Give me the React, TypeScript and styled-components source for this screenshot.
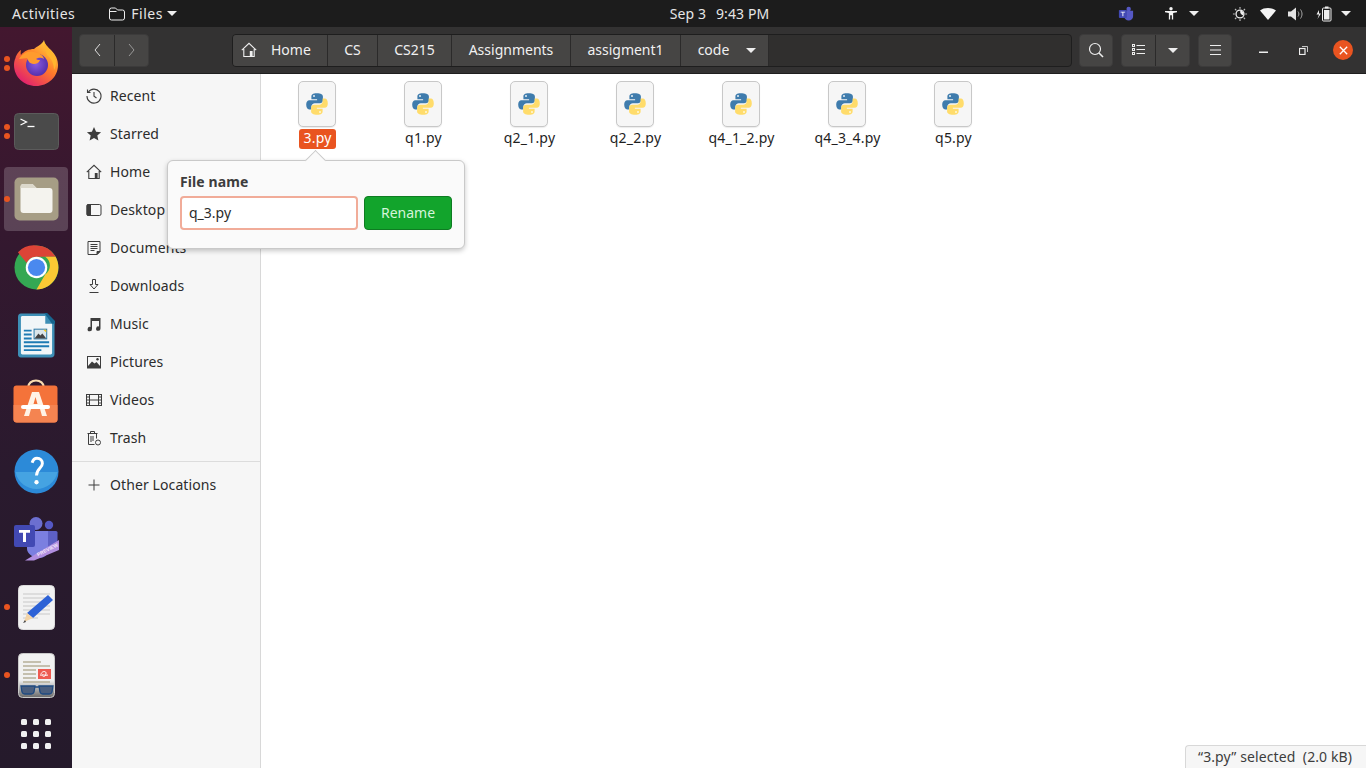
import React from "react";
import styled, { createGlobalStyle } from "styled-components";

const Global = createGlobalStyle`
  html, body { margin: 0; padding: 0; height: 100%; overflow: hidden; }
  body { font-family: "Noto Sans", "Open Sans", sans-serif; background: #fff; }
  #root { height: 768px; width: 1366px; }
`;

const Screen = styled.div`
  width: 1366px; height: 768px; display: flex; flex-direction: column; overflow: hidden;
`;
const TopBar = styled.header`
  height: 27px; flex: none; background: #1c1c1c; color: #e6e6e6; display: grid;
  grid-template-columns: 1fr auto 1fr; align-items: center; font-size: 14px;
`;
const TopLeft = styled.div`display: flex; align-items: center; padding-left: 12px; letter-spacing: 0.5px;`;
const AppMenu = styled.div`display: flex; align-items: center; gap: 6px; margin-left: 34px; & > svg:last-child { margin-left: -2px; }`;
const Clock = styled.div`display: flex; gap: 10px; font-size: 14px; margin-left: 73px; letter-spacing: 0.1px;`;
const Tray = styled.div`display: flex; align-items: center; justify-content: flex-end; padding-right: 15px;`;
const TrayItem = styled.span<{ $ml?: number }>`display: inline-flex; margin-left: ${p => p.$ml ?? 0}px;`;

const Body = styled.div`flex: 1; display: flex; min-height: 0;`;
const Dock = styled.nav`
  width: 72px; flex: none; display: flex; flex-direction: column; align-items: center; padding-top: 4px; overflow: hidden;
  background: linear-gradient(180deg, #43172f 0%, #33182f 30%, #2a1a2e 60%, #251a2b 100%);
`;
const DockSlot = styled.div<{ $active?: boolean }>`
  position: relative; width: 64px; height: 64px; flex: none; margin-bottom: 4px; border-radius: 4px;
  display: flex; align-items: center; justify-content: center;
  background: ${p => (p.$active ? "rgba(255,255,255,0.19)" : "transparent")};
`;
const LauncherSlot = styled(DockSlot)`height: 46px;`;
const RunDots = styled.div`
  position: absolute; left: 0; top: 0; bottom: 0; display: flex; flex-direction: column;
  justify-content: center; gap: 3px;
`;
const Dot = styled.i`display: block; width: 6px; height: 6px; border-radius: 50%; background: #e95420;`;

const Window = styled.div`flex: 1; display: flex; flex-direction: column; min-width: 0;`;
const HeaderBar = styled.div`
  height: 47px; flex: none; background: #333232; border-bottom: 1px solid #1f1f1f;
  display: flex; align-items: center; color: #f0f0f0; font-size: 14px; box-sizing: border-box;
`;
const BtnGroup = styled.div<{ $ml?: number }>`
  display: flex; height: 33px; margin-left: ${p => p.$ml ?? 0}px; border-radius: 4px; background: #464544;
  border: 1px solid #3c3b3b; box-sizing: border-box; overflow: hidden;
`;
const HBtn = styled.div<{ $w: number; $dim?: boolean }>`
  width: ${p => p.$w}px; box-sizing: border-box; display: flex; align-items: center; justify-content: center;
  & + & { border-left: 1px solid #2b2a2a; }
  & > svg { opacity: ${p => (p.$dim ? 0.55 : 1)}; }
`;
const PathBar = styled.div`
  width: 840px; height: 33px; margin-left: 83px; display: flex; background: #302f2e;
  border: 1px solid #1e1e1e; border-radius: 4px; box-sizing: border-box; overflow: hidden;
`;
const Crumb = styled.div<{ $w: number }>`
  width: ${p => p.$w}px; flex: none; box-sizing: border-box; background: #464544; border-right: 1px solid #2b2a2a;
  display: flex; align-items: center; justify-content: center; font-size: 14px;
  padding-bottom: 2px;
`;
const HomeCrumb = styled(Crumb)`justify-content: flex-start; padding-left: 8px; gap: 14px; & > svg { margin-top: 2px; }`;
const CodeCrumb = styled(Crumb)`gap: 17px; padding-left: 5px; & > svg { margin-top: 2px; }`;
const WinCtl = styled.div<{ $w: number; $ml?: number }>`
  width: ${p => p.$w}px; margin-left: ${p => p.$ml ?? 0}px; display: flex; align-items: center; justify-content: center;
`;
const CloseDot = styled.div`
  width: 20px; height: 20px; border-radius: 50%; background: #e95420; display: flex; align-items: center; justify-content: center;
`;

const Content = styled.div`flex: 1; display: flex; min-height: 0; position: relative;`;
const Sidebar = styled.aside`
  width: 188px; flex: none; background: #f6f6f6; border-right: 1px solid #d8d8d8; color: #2c2c2c;
  font-size: 14px; letter-spacing: 0.1px; padding-top: 3px;
`;
const SideRow = styled.div`height: 38px; display: flex; align-items: center; padding-left: 14px; gap: 8px; & > span:last-child { margin-top: -2px; }`;
const SideIcon = styled.span`width: 16px; height: 16px; display: inline-flex; color: #3d3d3d;`;
const SideSep = styled.div`height: 1px; background: #dcdcdc; margin: 4px 0 4px;`;

const Files = styled.main`
  flex: 1; background: #fff; position: relative; display: flex; align-items: flex-start; padding: 7px 0 0 3px;
`;
const FileItem = styled.div`
  width: 106px; display: flex; flex-direction: column; align-items: center; color: #1f1f1f; font-size: 14px; letter-spacing: 0.2px;
`;
const FileThumb = styled.div`
  width: 38px; height: 46px; box-sizing: border-box; border: 1px solid #c8c8c8; border-radius: 5px; background: #f6f6f6;
  display: flex; align-items: center; justify-content: center; box-shadow: 0 1px 1px rgba(0,0,0,0.08);
`;
const FileLabel = styled.div<{ $sel?: boolean }>`
  margin: 2px 0 0 1px; height: 20px; line-height: 18px; padding: 0 4px; border-radius: 3px; box-sizing: border-box;
  background: ${p => (p.$sel ? "#e95420" : "transparent")}; color: ${p => (p.$sel ? "#fff" : "#1f1f1f")};
`;

const Popover = styled.div`
  position: absolute; left: 95px; top: 86px; width: 298px; height: 89px; box-sizing: border-box; z-index: 3;
  background: #fafafa; border: 1px solid #c9c9c9; border-radius: 6px; padding: 12px;
  box-shadow: 0 2px 5px rgba(0,0,0,0.22); display: flex; flex-direction: column;
  &::before {
    content: ""; position: absolute; left: 140px; top: -8px; width: 14px; height: 14px; background: #fafafa;
    border-left: 1px solid #c9c9c9; border-top: 1px solid #c9c9c9; transform: rotate(45deg);
  }
`;
const PopLabel = styled.div`font-size: 14px; font-weight: 700; color: #3d3d3d; line-height: 18px; letter-spacing: 0.1px;`;
const PopRow = styled.div`display: flex; gap: 6px; margin-top: 5px;`;
const NameInput = styled.div`
  width: 178px; height: 34px; box-sizing: border-box; border: 2px solid #f1ac99; border-radius: 4px; background: #fff;
  display: flex; align-items: center; padding: 0 0 2px 7px; font-size: 14px; color: #2c2c2c;
`;
const RenameBtn = styled.div`
  width: 88px; height: 34px; box-sizing: border-box; background: #12a42c; border: 1px solid #0e7c22; border-radius: 4px;
  display: flex; align-items: center; justify-content: center; padding-bottom: 2px; color: #d5f5da; font-size: 14px;
`;
const StatusTag = styled.div`
  position: absolute; right: 0; bottom: 0; height: 23px; width: 181px; box-sizing: border-box; background: #f6f6f6;
  border: 1px solid #d8d8d8; border-right: none; border-bottom: none; border-top-left-radius: 4px; color: #3d3d3d;
  font-size: 14px; letter-spacing: 0.1px; padding-left: 12px; line-height: 21px; white-space: pre;
`;
const Launcher = styled.div`
  display: grid; grid-template-columns: repeat(3, 6px); gap: 6px; justify-content: center;
`;
const LaunchDot = styled.i`width: 6px; height: 6px; border-radius: 1.5px; background: #f0f0f0; display: block;`;

const Python = () => (
  <svg width="24" height="24" viewBox="0 0 24 24">
    <path d="M11.800 1.200C7.600 1.200 6.400 2.800 6.400 4.500V7.200h5.700v1H4.400C2.400 8.200 1.200 9.800 1.200 12.600c0 3 1.200 4.900 3 4.900h2.200v-2.800c0-2 1.600-3.500 3.500-3.500h5c1.600 0 3-1.300 3-3V4.400C17.900 2.500 16 1.200 11.800 1.200z" fill="#3f7cad"/>
    <circle cx="9" cy="4" r="1" fill="#e8f0f6"/>
    <path d="M12.200 22.800c4.200 0 5.400-1.600 5.400-3.300V16.800h-5.700v-1h7.700c2 0 3.200-1.600 3.200-4.400 0-3-1.200-4.900-3-4.900h-2.200v2.800c0 2-1.600 3.500-3.500 3.500h-5c-1.600 0-3 1.300-3 3v3.800C6.100 21.500 8 22.800 12.200 22.800z" fill="#ffdc6b"/>
    <circle cx="15" cy="20" r="1" fill="#fff8d8"/>
  </svg>
);

const Caret = ({ c = "#eee" }: { c?: string }) => (
  <svg width="10" height="5" viewBox="0 0 10 5"><path d="M0 0h10L5 5z" fill={c}/></svg>
);

const HomeGlyph = ({ c, s = 16 }: { c: string; s?: number }) => (
  <svg width={s} height={s} viewBox="0 0 16 16" fill="none" stroke={c} strokeWidth="1.100">
    <path d="M.8 8.200 8 1.300l7.200 6.900M2.800 7v7.500h10.400V7"/>
    <rect x="8.800" y="9" width="2.800" height="5.500" fill={c} stroke="none"/>
  </svg>
);

const sideIcons: Record<string, React.ReactNode> = {
  Recent: <svg viewBox="0 0 16 16" fill="none" stroke="currentColor" strokeWidth="1.100"><path d="M2.200 4.200A7 7 0 1 1 1 8"/><path d="M1.500 1.500v3h3" /><path d="M8 4v4.300l2.500 1.700"/></svg>,
  Starred: <svg viewBox="0 0 16 16" fill="currentColor"><path d="M8 1l2.100 4.700 5 .5-3.800 3.400 1.100 5L8 12.100l-4.400 2.500 1.100-5L.9 6.200l5-.5z"/></svg>,
  Home: <HomeGlyph c="#3d3d3d" />,
  Desktop: <svg viewBox="0 0 16 16" fill="none" stroke="currentColor" strokeWidth="1"><rect x="1" y="2.500" width="14" height="11" rx="1.500"/><path d="M1 3.500a1 1 0 0 1 1-1h2.500v11H2a1 1 0 0 1-1-1z" fill="currentColor"/></svg>,
  Documents: <svg viewBox="0 0 16 16" fill="none" stroke="currentColor" strokeWidth="1"><path d="M2 1.500h12v10l-3 3H2z"/><path d="M4.500 4.500h7M4.500 6.500h7M4.500 8.500h7M4.500 10.500h4"/><path d="M14 11.500h-3v3z" fill="currentColor"/></svg>,
  Downloads: <svg viewBox="0 0 16 16" fill="none" stroke="currentColor" strokeWidth="1"><path d="M6.500 1.500h3v5h2.500L8 11 4 6.500h2.500zM3.500 14.500h9"/></svg>,
  Music: <svg viewBox="0 0 16 16" fill="currentColor"><path d="M4.500 2h10v10.500a2.200 2.200 0 1 1-1.500-2V5H6v8a2.200 2.200 0 1 1-1.500-2z"/></svg>,
  Pictures: <svg viewBox="0 0 16 16"><rect x="1" y="2" width="14" height="12.500" fill="currentColor"/><rect x="2" y="3" width="12" height="9" fill="#f6f6f6"/><path d="M2 12l4-4.500 2.500 2 2-1.500 3.500 4z" fill="currentColor"/><circle cx="11.500" cy="5.200" r="1.200" fill="currentColor"/></svg>,
  Videos: <svg viewBox="0 0 16 16" fill="none" stroke="currentColor" strokeWidth="1"><rect x=".5" y="2.500" width="15" height="11"/><path d="M3.500 2.500v11M12.500 2.500v11M3.500 8h9M.5 5h3M.5 8h3M.5 11h3M12.500 5h3M12.500 8h3M12.500 11h3"/></svg>,
  Trash: <svg viewBox="0 0 16 16" fill="none" stroke="currentColor" strokeWidth="1"><path d="M1.500 3.500h10M4.500 3.500V1.500h4v2M2.500 3.500v11h6M10.500 3.500v5M5 6v6M7 6v5"/><circle cx="12" cy="12.500" r="2.500"/></svg>,
};

const sideItems = ["Recent", "Starred", "Home", "Desktop", "Documents", "Downloads", "Music", "Pictures", "Videos", "Trash"];
const files = ["3.py", "q1.py", "q2_1.py", "q2_2.py", "q4_1_2.py", "q4_3_4.py", "q5.py"];

const Firefox = () => (
  <svg width="46" height="48" viewBox="0 0 46 48">
    <defs>
      <linearGradient id="ffa" x1="0.800" y1="0.100" x2="0.200" y2="0.900"><stop offset="0" stopColor="#ffc93a"/><stop offset=".45" stopColor="#ff7a2a"/><stop offset="1" stopColor="#e3256b"/></linearGradient>
      <radialGradient id="ffb" cx=".45" cy=".45" r=".6"><stop offset="0" stopColor="#8a5ce0"/><stop offset="1" stopColor="#4f2ca8"/></radialGradient>
    </defs>
    <path d="M31 1c1 5 4 7 7 10 5 5 7 10 7 15 0 12-10 21-22 21S1 38 1 26c0-3 .5-5 1.500-7C3 16 6 12 8 11c-.5 2-.5 4 0 5 3-4 8-6 13-6 3-3 8-4 10-9z" fill="url(#ffa)"/>
    <circle cx="24" cy="26" r="11" fill="url(#ffb)"/>
    <path d="M6 20c3-5 9-9 15-7 5 1 9 3 10 7-3-2-6-1-8 0 1 1 3 1 4 1-1 3-4 4-6 4-5 0-6-4-7-6-2 0-5 1-8 1z" fill="#ff9b2e"/>
    <path d="M31 3c2 5 8 8 11 15 2 5 1 10-1 13 0-7-3-12-7-15-1-4-3-9-3-13z" fill="#ffb52e"/>
  </svg>
);
const TerminalIcon = () => (
  <svg width="45" height="37" viewBox="0 0 45 37">
    <rect x=".5" y=".5" width="44" height="36" rx="4" fill="#4a4a4a" stroke="#5b5b5b"/>
    <path d="M6.500 6l6 3-6 3" stroke="#fff" strokeWidth="1.300" fill="none"/>
    <path d="M13.500 13.500h7" stroke="#fff" strokeWidth="1.300"/>
  </svg>
);
const FilesIcon = () => (
  <svg width="45" height="44" viewBox="0 0 45 44">
    <rect x=".5" y=".5" width="44" height="43" rx="5" fill="#a69d85"/>
    <path d="M6.500 10a3 3 0 0 1 3-3h9l4 4h13a3 3 0 0 1 3 3v19a3 3 0 0 1-3 3h-26a3 3 0 0 1-3-3z" fill="#f4f3ee"/>
    <path d="M6.500 10a3 3 0 0 1 3-3h9l4 4h-16z" fill="#dcd8cb"/>
  </svg>
);
const ChromeIcon = () => (
  <svg width="45" height="45" viewBox="0 0 46 46">
    <circle cx="23" cy="23" r="22.500" fill="#34a853"/>
    <path d="M23 .5A22.500 22.500 0 0 1 42.500 12H23a11 11 0 0 0-10 6.500L4 7.500A22.500 22.500 0 0 1 23 .5z" fill="#dc4437"/>
    <path d="M42.500 12A22.500 22.500 0 0 1 23 45.500L32 30a11 11 0 0 0 0-18z" fill="#fbc934"/>
    <circle cx="23" cy="23" r="11" fill="#fff"/>
    <circle cx="23" cy="23" r="8.800" fill="#4a89ef"/>
  </svg>
);
const WriterIcon = () => (
  <svg width="37" height="45" viewBox="0 0 38 46">
    <path d="M3 .5h26l8.500 8.500v33a3.500 3.500 0 0 1-3.500 3.500H3A3 3 0 0 1 0 42V4a3.500 3.500 0 0 1 3-3.500z" fill="#3d8fb6"/>
    <path d="M4 3h24v8h7v30a1.500 1.500 0 0 1-1.500 1.500H4.500A1.500 1.500 0 0 1 3 41V4z" fill="#f1f6f8"/>
    <path d="M27 0h3l8 8v3h-3z" fill="#17668f"/>
    <path d="M6 17h8v2H6zM6 21h8v2H6zM6 25h8v2H6zM6 29h26v2H6zM6 33h26v2H6zM6 37h18v2H6z" fill="#1f7bb3"/>
    <rect x="16" y="16" width="14" height="11" fill="#2a79a7"/><rect x="17" y="17" width="12" height="9" fill="#dbe6ea"/>
    <path d="M17 26l4-5 2 2 2-2 4 5z" fill="#444"/><path d="M26 17h3v3z" fill="#f5c518"/>
  </svg>
);
const StoreIcon = () => (
  <svg width="46" height="48" viewBox="0 0 46 48">
    <path d="M15 9c0-10 16-10 16 0" fill="none" stroke="#f8dcb0" strokeWidth="2.200"/>
    <rect x=".5" y="6.500" width="44" height="37" rx="3" fill="#f4733a"/>
    <path d="M.5 26h44v14a3.500 3.500 0 0 1-3.500 3.500H4A3.500 3.500 0 0 1 .5 40z" fill="#f58451"/>
    <path d="M19 13h7l8 24h-5l-2-7h-9l-2 7h-5z M20.500 25h4l-2-7z" fill="#fff3e6" fillRule="evenodd"/>
    <rect x="8" y="26" width="29" height="4" rx="2" fill="#fff"/>
  </svg>
);
const HelpIcon = () => (
  <svg width="45" height="45" viewBox="0 0 46 46">
    <circle cx="23" cy="23" r="22.500" fill="#2c8ad8"/>
    <path d="M1.500 23.500h43a22 22 0 0 1-43 0z" fill="#45a3e2"/>
    <path d="M18.500 14c1-3 3-4.500 5-4.500 3.500 0 5.500 2.300 5.500 5.200 0 5-6 5.500-6 12.500" fill="none" stroke="#fff" strokeWidth="3"/>
    <circle cx="23" cy="34" r="2.200" fill="#fff"/>
  </svg>
);
const TeamsIcon = () => (
  <svg width="46" height="44" viewBox="0 0 46 44">
    <circle cx="23" cy="6.500" r="6.500" fill="#6c6fd0"/><circle cx="36" cy="8" r="4.200" fill="#5558c4"/>
    <path d="M30 14h13a1.500 1.500 0 0 1 1.500 1.500V30L30 38z" fill="#5d60c4"/>
    <path d="M14 14h21v19c0 5-4 8-9 8s-12-4-12-9z" fill="#7b7fe0"/>
    <rect x="1" y="8" width="21" height="22" rx="2" fill="#4249b3"/>
    <path d="M6 13h11v2.800h-4V25h-3v-9.200H6z" fill="#fff"/>
    <path d="M46 23v10L21 43.500H12z" fill="#b18ee0"/>
    <text x="0" y="0" transform="translate(25 39.500) rotate(-27)" fontSize="5" fontWeight="700" fontFamily="'Liberation Sans', sans-serif" fill="#f0e6fa">PREVIEW</text>
  </svg>
);
const TextEditIcon = () => (
  <svg width="37" height="45" viewBox="0 0 37 45">
    <rect x=".5" y=".5" width="36" height="44" rx="4" fill="#f2f2f2" stroke="#dcdcdc"/>
    <path d="M5 9h27M5 13h27M5 17h27M5 21h27M5 25h27M5 29h27M5 33h15" stroke="#c8c8c8" strokeWidth="1"/>
    <path d="M30 10l5 5-20 18-6-5z" fill="#2d62d6"/>
    <path d="M9 28l6 5-9 4z" fill="#f2d4a8"/><path d="M7 35l-2 3 3-1z" fill="#444"/>
  </svg>
);
const ReaderIcon = () => (
  <svg width="37" height="45" viewBox="0 0 37 45">
    <defs><linearGradient id="rdg" x1="0" y1="0" x2="0" y2="1"><stop offset=".6" stopColor="#f1f1f1"/><stop offset="1" stopColor="#6a6a6a"/></linearGradient></defs>
    <rect x=".5" y=".5" width="36" height="44" rx="4" fill="url(#rdg)" stroke="#c9c9c9"/>
    <path d="M5 9h18M5 13h27M5 17h13M5 21h13M5 25h13M5 29h27" stroke="#b5ae98" strokeWidth="1.600"/>
    <rect x="20" y="16" width="13" height="10" fill="#ee5a50"/>
    <path d="M23 23c-1-5 6-6 5-2s-4 2-4 1 3 1 6 0" stroke="#fff" fill="none"/>
    <path d="M3 33h14l-1 6a3 3 0 0 1-3 2H7a3 3 0 0 1-3-2zM21 33h14l-1 6a3 3 0 0 1-3 2h-6a3 3 0 0 1-3-2zM17 34h4" fill="#4b5f7f" stroke="#1f4a80" strokeWidth="1.300"/>
  </svg>
);

export default function App() {
  return (
    <Screen>
      <Global />
      <TopBar>
        <TopLeft>
          <span>Activities</span>
          <AppMenu>
            <svg width="16" height="14" viewBox="0 0 16 14" fill="none" stroke="#eee" strokeWidth="1"><path d="M.5 3a2 2 0 0 1 2-2h4l2 2h5a2 2 0 0 1 2 2v6a2 2 0 0 1-2 2h-11a2 2 0 0 1-2-2z"/><path d="M.5 4.500h7"/></svg>
            <span>Files</span>
            <Caret />
          </AppMenu>
        </TopLeft>
        <Clock><span>Sep 3</span><span>9:43 PM</span></Clock>
        <Tray>
          <TrayItem>
            <svg width="16" height="15" viewBox="0 0 18 16"><circle cx="12" cy="3" r="2.500" fill="#5558c4"/><path d="M6 5h11v6a5 5 0 0 1-10 0z" fill="#5558c4"/><rect x="1" y="4" width="9" height="9" rx="1" fill="#4249b3"/><path d="M3 6h5v1H6v4H5V7H3z" fill="#fff"/></svg>
          </TrayItem>
          <TrayItem $ml={31}>
            <svg width="12" height="15" viewBox="0 0 14 16" fill="#f4f4f4"><circle cx="7" cy="2.500" r="2"/><path d="M0 5h14v1.500l-4.500 1V15H8v-5H6v5H4.500V7.500L0 6.500z"/></svg>
          </TrayItem>
          <TrayItem $ml={12}><Caret /></TrayItem>
          <TrayItem $ml={33}>
            <svg width="16" height="16" viewBox="0 0 17 17" stroke="#bbb" fill="none"><circle cx="8.500" cy="8.500" r="4.200" strokeWidth="1.400" stroke="#eee"/><path d="M9 4.500a4 4 0 0 1 3 5.500 4 4 0 0 1-3-5.500z" fill="#eee" stroke="none"/><path d="M8.500 1v2M8.500 14v2M1 8.500h2M14 8.500h2M3.200 3.200l1.400 1.400M12.400 12.400l1.400 1.400M3.200 13.800l1.400-1.400M12.400 4.600l1.400-1.400" strokeWidth="1.300"/></svg>
          </TrayItem>
          <TrayItem $ml={12}>
            <svg width="16" height="12" viewBox="0 0 16 12"><path d="M0 2.500C4-.8 12-.8 16 2.500L8 12z" fill="#f4f4f4"/></svg>
          </TrayItem>
          <TrayItem $ml={12}>
            <svg width="15" height="14" viewBox="0 0 15 14" fill="none" stroke="#a8a8a8"><path d="M0 4.500h3L8 .5v13l-5-4H0z" fill="#e4e4e4" stroke="none"/><path d="M10 4.500c1.200 1.500 1.200 3.500 0 5M12.500 2.500c2 3 2 6 0 9" strokeWidth="1"/></svg>
          </TrayItem>
          <TrayItem $ml={13}>
            <svg width="16" height="16" viewBox="0 0 16 16" fill="none"><path d="M3 4 .5 8.500H3L1.500 13 5 7.500H3z" fill="#eee"/><rect x="6.500" y="2" width="8.500" height="13" rx="1" stroke="#eee"/><rect x="9" y=".5" width="3.500" height="2" fill="#eee"/><rect x="8" y="4" width="5.500" height="9.500" fill="#eee"/></svg>
          </TrayItem>
          <TrayItem $ml={9}><Caret /></TrayItem>
        </Tray>
      </TopBar>
      <Body>
        <Dock>
          <DockSlot><RunDots><Dot /><Dot /></RunDots><Firefox /></DockSlot>
          <DockSlot><RunDots><Dot /><Dot /></RunDots><TerminalIcon /></DockSlot>
          <DockSlot $active><RunDots><Dot /></RunDots><FilesIcon /></DockSlot>
          <DockSlot><ChromeIcon /></DockSlot>
          <DockSlot><WriterIcon /></DockSlot>
          <DockSlot><StoreIcon /></DockSlot>
          <DockSlot><HelpIcon /></DockSlot>
          <DockSlot><TeamsIcon /></DockSlot>
          <DockSlot><RunDots><Dot /></RunDots><TextEditIcon /></DockSlot>
          <DockSlot><RunDots><Dot /></RunDots><ReaderIcon /></DockSlot>
          <LauncherSlot>
            <Launcher>{Array.from({ length: 9 }, (_, i) => <LaunchDot key={i} />)}</Launcher>
          </LauncherSlot>
        </Dock>
        <Window>
          <HeaderBar>
            <BtnGroup $ml={7}>
              <HBtn $w={34}><svg width="7" height="14" viewBox="0 0 7 14" fill="none" stroke="#ddd"><path d="M6 1 1 7l5 6"/></svg></HBtn>
              <HBtn $w={34} $dim><svg width="7" height="14" viewBox="0 0 7 14" fill="none" stroke="#ddd"><path d="M1 1l5 6-5 6"/></svg></HBtn>
            </BtnGroup>
            <PathBar>
              <HomeCrumb $w={95}><HomeGlyph c="#f0f0f0" /><span>Home</span></HomeCrumb>
              <Crumb $w={50}>CS</Crumb>
              <Crumb $w={74}>CS215</Crumb>
              <Crumb $w={119}>Assignments</Crumb>
              <Crumb $w={110}>assigment1</Crumb>
              <CodeCrumb $w={88}><span>code</span><Caret /></CodeCrumb>
            </PathBar>
            <BtnGroup $ml={7}>
              <HBtn $w={32}><svg width="16" height="16" viewBox="0 0 16 16" fill="none" stroke="#eee" strokeWidth="1.200"><circle cx="7" cy="7" r="5.500"/><path d="M11 11l4 4" strokeWidth="1.600"/></svg></HBtn>
            </BtnGroup>
            <BtnGroup $ml={8}>
              <HBtn $w={33}><svg width="13" height="12" viewBox="0 0 13 12" fill="none" stroke="#eee"><rect x=".5" y=".5" width="2" height="2"/><rect x=".5" y="4.500" width="2" height="2"/><rect x=".5" y="8.500" width="2" height="2"/><path d="M4.500 1.500H13M4.500 5.500H13M4.500 9.500H13"/></svg></HBtn>
              <HBtn $w={34}><Caret /></HBtn>
            </BtnGroup>
            <BtnGroup $ml={8}>
              <HBtn $w={32}><svg width="11" height="10" viewBox="0 0 11 10" stroke="#eee"><path d="M0 .5h11M0 5h11M0 9.500h11"/></svg></HBtn>
            </BtnGroup>
            <WinCtl $w={28} $ml={17}><svg width="9" height="6" viewBox="0 0 9 6"><rect y="4.500" width="9" height="1.500" fill="#eee"/></svg></WinCtl>
            <WinCtl $w={28} $ml={12}><svg width="9" height="9" viewBox="0 0 9 9" fill="none" stroke="#eee"><rect x=".5" y="2.500" width="5.500" height="6" strokeWidth="1.200"/><path d="M3 .5h5.500V6" strokeWidth=".8"/></svg></WinCtl>
            <WinCtl $w={20} $ml={16}><CloseDot><svg width="9" height="9" viewBox="0 0 9 9" stroke="#fff" strokeWidth="1.300"><path d="M.8.800l7.400 7.400M8.200.800 .8 8.200"/></svg></CloseDot></WinCtl>
          </HeaderBar>
          <Content>
            <Sidebar>
              {sideItems.map(n => (
                <SideRow key={n}><SideIcon>{sideIcons[n]}</SideIcon><span>{n}</span></SideRow>
              ))}
              <SideSep />
              <SideRow>
                <SideIcon><svg viewBox="0 0 16 16" stroke="currentColor"><path d="M8 2.500v11M2.500 8h11"/></svg></SideIcon>
                <span>Other Locations</span>
              </SideRow>
            </Sidebar>
            <Files>
              {files.map((f, i) => (
                <FileItem key={f}>
                  <FileThumb><Python /></FileThumb>
                  <FileLabel $sel={i === 0}>{f}</FileLabel>
                </FileItem>
              ))}
              <StatusTag>{"“3.py” selected  (2.0 kB)"}</StatusTag>
            </Files>
            <Popover>
              <PopLabel>File name</PopLabel>
              <PopRow>
                <NameInput>q_3.py</NameInput>
                <RenameBtn>Rename</RenameBtn>
              </PopRow>
            </Popover>
          </Content>
        </Window>
      </Body>
    </Screen>
  );
}
